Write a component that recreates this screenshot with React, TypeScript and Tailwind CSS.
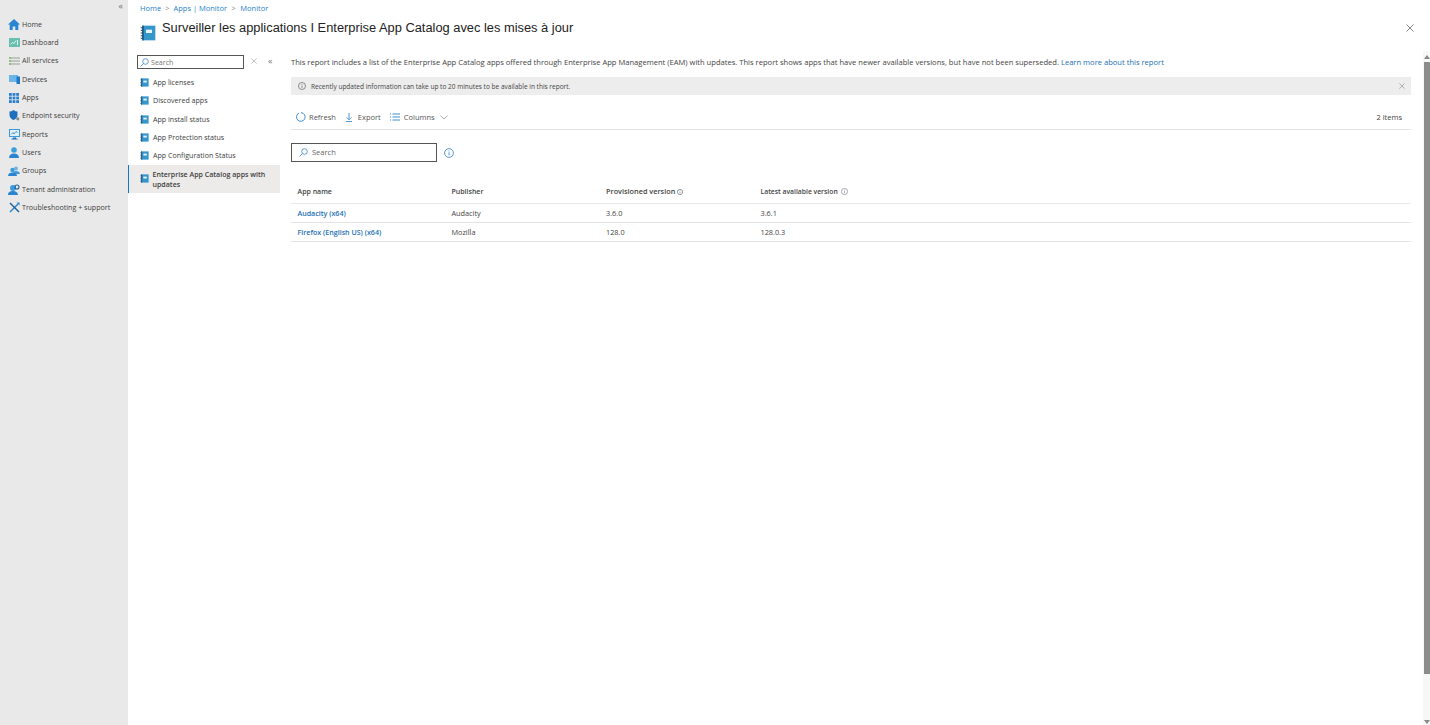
import React from "react";

function NoteIcon({ size = 11 }: { size?: number }) {
  return (
    <svg width={size} height={size} viewBox="0 0 12 12" className="shrink-0">
      <rect x="1.5" y="0.5" width="10" height="11" fill="#3596cc" />
      <rect x="1.5" y="0.5" width="1.5" height="11" fill="#1d6a99" />
      <rect x="4.5" y="3.5" width="4.5" height="2.5" fill="#e8f4fb" />
      <path d="M0.5 2h2M0.5 4h2M0.5 6h2M0.5 8h2M0.5 10h2" stroke="#33495a" strokeWidth="0.8" />
    </svg>
  );
}

function Nav({ children, label }: { children: React.ReactNode; label: string }) {
  return (
    <div className="flex h-[18.3px] items-center pl-[7px] text-[#3d3d3d]">
      <span className="flex w-[14px] shrink-0 justify-center">{children}</span>
      <span className="ml-[1px]">{label}</span>
    </div>
  );
}

const navs: [string, React.ReactNode][] = [
  ["Home", <svg width="12" height="11" viewBox="0 0 12 11"><path d="M6 0L0 5.5h1.7V11h3V7.5h2.6V11h3V5.5H12z" fill="#2a84d2" /></svg>],
  ["Dashboard", <svg width="11" height="9" viewBox="0 0 11 9"><rect width="11" height="9" fill="#67c0b0" /><path d="M1.5 6.5l2-2 1.5 1 2-3M8.5 2v5" stroke="#fff" strokeWidth="0.8" fill="none" /></svg>],
  ["All services", <svg width="11" height="8" viewBox="0 0 11 8"><path d="M0 1h11M0 4h11M0 7h11" stroke="#8a9a8a" strokeWidth="0.9" /><path d="M0 1h2M0 4h2M0 7h2" stroke="#68b43a" strokeWidth="0.9" /></svg>],
  ["Devices", <svg width="11" height="9" viewBox="0 0 11 9"><rect width="9" height="7" fill="#6cb4ea" /><rect x="7.5" y="1.5" width="3.5" height="7.5" fill="#1f78c8" /></svg>],
  ["Apps", <svg width="10" height="10" viewBox="0 0 10 10" fill="#2c7fd0"><rect width="2.8" height="2.8" /><rect x="3.6" width="2.8" height="2.8" /><rect x="7.2" width="2.8" height="2.8" /><rect y="3.6" width="2.8" height="2.8" /><rect x="3.6" y="3.6" width="2.8" height="2.8" /><rect x="7.2" y="3.6" width="2.8" height="2.8" /><rect y="7.2" width="2.8" height="2.8" /><rect x="3.6" y="7.2" width="2.8" height="2.8" /><rect x="7.2" y="7.2" width="2.8" height="2.8" /></svg>],
  ["Endpoint security", <svg width="11" height="11" viewBox="0 0 11 11"><path d="M4.5 0C3.2 1 1.8 1.5 0.5 1.5v3.5c0 2.5 1.7 4 4 5 2.3-1 4-2.5 4-5V1.5C7.2 1.5 5.8 1 4.5 0z" fill="#1f6fc0" /><circle cx="8.8" cy="8.8" r="1.6" fill="#8a8a8a" /></svg>],
  ["Reports", <svg width="11" height="11" viewBox="0 0 11 11"><rect width="11" height="8" fill="#3a9bdc" /><rect x="1" y="1" width="9" height="6" fill="#dff0fa" /><path d="M2 5.5l2-2 1 1.5 2-2.5 1.5 1" stroke="#2b6ea8" strokeWidth="0.7" fill="none" /><path d="M4 8.5h3v1h1.5v1H2.5v-1H4z" fill="#1f6fc0" /></svg>],
  ["Users", <svg width="10" height="11" viewBox="0 0 10 11"><circle cx="5" cy="3" r="2.8" fill="#3aa0d8" /><path d="M0 11c0-3 2-4.5 5-4.5s5 1.5 5 4.5z" fill="#2a84d2" /></svg>],
  ["Groups", <svg width="12" height="10" viewBox="0 0 12 10"><circle cx="8" cy="2.5" r="2" fill="#6cb4ea" /><path d="M5 8c0-2 1.2-3 3-3s4 1 4 3z" fill="#3a9bdc" /><circle cx="4.5" cy="4" r="2.2" fill="#3a9bdc" /><path d="M0 10c0-2.5 2-3.5 4.5-3.5S9 7.5 9 10z" fill="#2a84d2" /></svg>],
  ["Tenant administration", <svg width="12" height="11" viewBox="0 0 12 11"><circle cx="5" cy="4" r="3" fill="#3a9bdc" /><path d="M0 11c0-3 2-4 5-4s4.5 1 5 4z" fill="#2a84d2" /><circle cx="9" cy="3" r="2" fill="none" stroke="#1f5f99" strokeWidth="1.1" /></svg>],
  ["Troubleshooting + support", <svg width="11" height="11" viewBox="0 0 11 11"><path d="M1 10L9 2" stroke="#2a84d2" strokeWidth="1.4" /><path d="M1 1l9 9" stroke="#1c5f9c" strokeWidth="1.4" /><path d="M7.5 0.5h3v3z" fill="#2a84d2" /></svg>],
];

const menu = ["App licenses", "Discovered apps", "App install status", "App Protection status", "App Configuration Status"];

function Search({ stroke = "#3b7fc4" }: { stroke?: string }) {
  return (
    <svg width="9" height="9" viewBox="0 0 9 9" fill="none" stroke={stroke} strokeWidth="0.8">
      <circle cx="5.5" cy="3.5" r="2.8" />
      <path d="M3.5 5.5L0.5 8.5" />
    </svg>
  );
}

function X({ size = 7, stroke = "#666" }: { size?: number; stroke?: string }) {
  return (
    <svg width={size} height={size} viewBox="0 0 8 8" stroke={stroke} strokeWidth="0.8">
      <path d="M0.5 0.5l7 7M7.5 0.5l-7 7" />
    </svg>
  );
}

function Info({ size = 8, stroke = "#555" }: { size?: number; stroke?: string }) {
  return (
    <svg width={size} height={size} viewBox="0 0 10 10" fill="none" stroke={stroke} strokeWidth="0.8" className="shrink-0">
      <circle cx="5" cy="5" r="4.4" />
      <path d="M5 4.3v3M5 2.5v0.9" />
    </svg>
  );
}

function Rows() {
  const rows = [
    ["Audacity (x64)", "Audacity", "3.6.0", "3.6.1"],
    ["Firefox (English US) (x64)", "Mozilla", "128.0", "128.0.3"],
  ];
  return (
    <>
      {rows.map((r) => (
        <div key={r[0]} className="flex h-[19px] items-center border-b border-[#e3e3e3] pl-[6.5px] text-[7.3px] text-[#444]">
          <span className="w-[154px] text-[7.1px] font-semibold text-[#1a6fb5]">{r[0]}</span>
          <span className="w-[154.5px]">{r[1]}</span>
          <span className="w-[154.5px]">{r[2]}</span>
          <span>{r[3]}</span>
        </div>
      ))}
    </>
  );
}

export default function App() {
  return (
    <div className="flex h-[725px] w-[1430px] overflow-hidden bg-white font-['Open_Sans',sans-serif] text-[7.1px] leading-[9px]">
      <aside className="flex w-[128px] shrink-0 flex-col bg-[#e9e9e9]">
        <div className="flex h-[15.2px] items-start justify-end pr-[5px] pt-[1px] text-[9px] leading-[9px] text-[#777]">«</div>
        {navs.map(([l, ic]) => (
          <Nav key={l} label={l}>{ic}</Nav>
        ))}
      </aside>

      <main className="flex min-w-0 flex-1 flex-col">
        <div className="flex h-[15px] items-center pl-[12px] pt-[2px] text-[7.5px] text-[#2a7fc9]">
          <span>Home</span>
          <span className="mx-[4px] text-[#888]">&gt;</span>
          <span>Apps | Monitor</span>
          <span className="mx-[4.5px] text-[#888]">&gt;</span>
          <span>Monitor</span>
        </div>
        <div className="flex h-[36px] pl-[12px] pr-[16px]">
          <div className="mt-[10px]"><NoteIcon size={16} /></div>
          <h1 className="ml-[6px] mt-[5px] font-['Liberation_Sans',sans-serif] text-[12.85px] font-normal leading-[16px] text-[#222]">
            Surveiller les applications I Enterprise App Catalog avec les mises à jour
          </h1>
          <div className="ml-auto mt-[9px]"><X size={8} /></div>
        </div>

        <div className="flex min-h-0 flex-1">
          <nav className="w-[152px] shrink-0">
            <div className="mb-[3.3px] flex h-[19px] items-start pl-[9px] pt-[4px]">
              <div className="flex h-[14px] w-[107px] items-center gap-[2px] border border-[#555] px-[2px] text-[#777]">
                <Search /><span>Search</span>
              </div>
              <div className="ml-[7px] mt-[3px]"><X size={6} stroke="#999" /></div>
              <span className="ml-[11px] text-[9px] leading-[12px] text-[#777]">«</span>
            </div>
            {menu.map((m) => (
              <div key={m} className="flex h-[18.3px] items-center gap-[4px] pl-[12px] text-[#3d3d3d]">
                <NoteIcon size={9} />
                <span>{m}</span>
              </div>
            ))}
            <div className="flex h-[28px] items-center gap-[4px] border-l-[1.5px] border-[#0f78d4] bg-[#edebe9] pl-[10.5px] pr-[8px] text-[7.05px] font-semibold text-[#3d3d3d]">
              <NoteIcon size={9} />
              <span className="leading-[10px]">Enterprise App Catalog apps with updates</span>
            </div>
          </nav>

          <section className="min-w-0 flex-1 pl-[11px] pr-[12px]">
            <p className="mt-[7px] whitespace-nowrap text-[7.58px] text-[#444]">
              This report includes a list of the Enterprise App Catalog apps offered through Enterprise App Management (EAM) with updates. This report shows apps that have newer available versions, but have not been superseded.{" "}
              <span className="text-[#1a6fb5]">Learn more about this report</span>
            </p>
            <div className="mt-[10px] flex h-[18px] items-center gap-[5px] bg-[#ededed] pl-[7px] pr-[6px] text-[#444]">
              <Info />
              <span className="text-[6.52px]">Recently updated information can take up to 20 minutes to be available in this report.</span>
              <div className="ml-auto"><X size={6} stroke="#888" /></div>
            </div>
            <div className="mt-[10px] flex h-[25px] items-center border-b border-[#e3e3e3] pl-[5px] pr-[9px] text-[7.5px] text-[#555]">
              <svg width="10" height="10" viewBox="0 0 10 10" fill="none" stroke="#2a7fc9" strokeWidth="0.9"><path d="M3 1.1A4.3 4.3 0 1 0 5 0.7" /></svg>
              <span className="ml-[3px]">Refresh</span>
              <svg className="ml-[9px]" width="8" height="9" viewBox="0 0 8 9" fill="none" stroke="#2a7fc9" strokeWidth="0.8"><path d="M4 0v6.5M1.5 4.3L4 6.8l2.5-2.5M1 8.5h6" /></svg>
              <span className="ml-[5px]">Export</span>
              <svg className="ml-[9px]" width="10" height="8" viewBox="0 0 10 8" stroke="#2a7fc9" strokeWidth="0.9"><path d="M2.5 1H10M2.5 4H10M2.5 7H10M0 1h1M0 4h1M0 7h1" /></svg>
              <span className="ml-[4px]">Columns</span>
              <svg className="ml-[5px]" width="8" height="5" viewBox="0 0 8 5" fill="none" stroke="#888" strokeWidth="0.7"><path d="M0.5 0.5L4 4l3.5-3.5" /></svg>
              <span className="ml-auto text-[#444]">2 items</span>
            </div>
            <div className="mt-[13px] flex items-center gap-[7px]">
              <div className="flex h-[19px] w-[146px] items-center gap-[4px] border border-[#555] px-[7px] text-[7.5px] text-[#666]">
                <Search /><span>Search</span>
              </div>
              <Info size={10} stroke="#2a7fc9" />
            </div>
            <div className="mt-[18px] flex h-[24px] items-center border-b border-[#e9e9e9] pl-[6.5px] text-[7px] font-semibold text-[#444]">
              <span className="w-[154px]">App name</span>
              <span className="w-[154.5px]">Publisher</span>
              <span className="flex w-[154.5px] items-center gap-[1.5px] text-[7.3px]">Provisioned version <Info size={6} stroke="#333" /></span>
              <span className="flex items-center gap-[3px] text-[6.8px]">Latest available version <Info size={7} stroke="#666" /></span>
            </div>
            <Rows />
          </section>

          <div className="flex w-[7px] shrink-0 flex-col items-center bg-[#f7f7f7] pt-[4px]">
            <span className="h-0 w-0 border-x-[3px] border-b-[4px] border-x-transparent border-b-[#888]" />
            <span className="mt-[3px] h-[612px] w-[6px] bg-[#8c8c8c]" />
            <span className="mb-[1px] mt-auto h-0 w-0 border-x-[3px] border-t-[4px] border-x-transparent border-t-[#888]" />
          </div>
        </div>
      </main>
    </div>
  );
}
